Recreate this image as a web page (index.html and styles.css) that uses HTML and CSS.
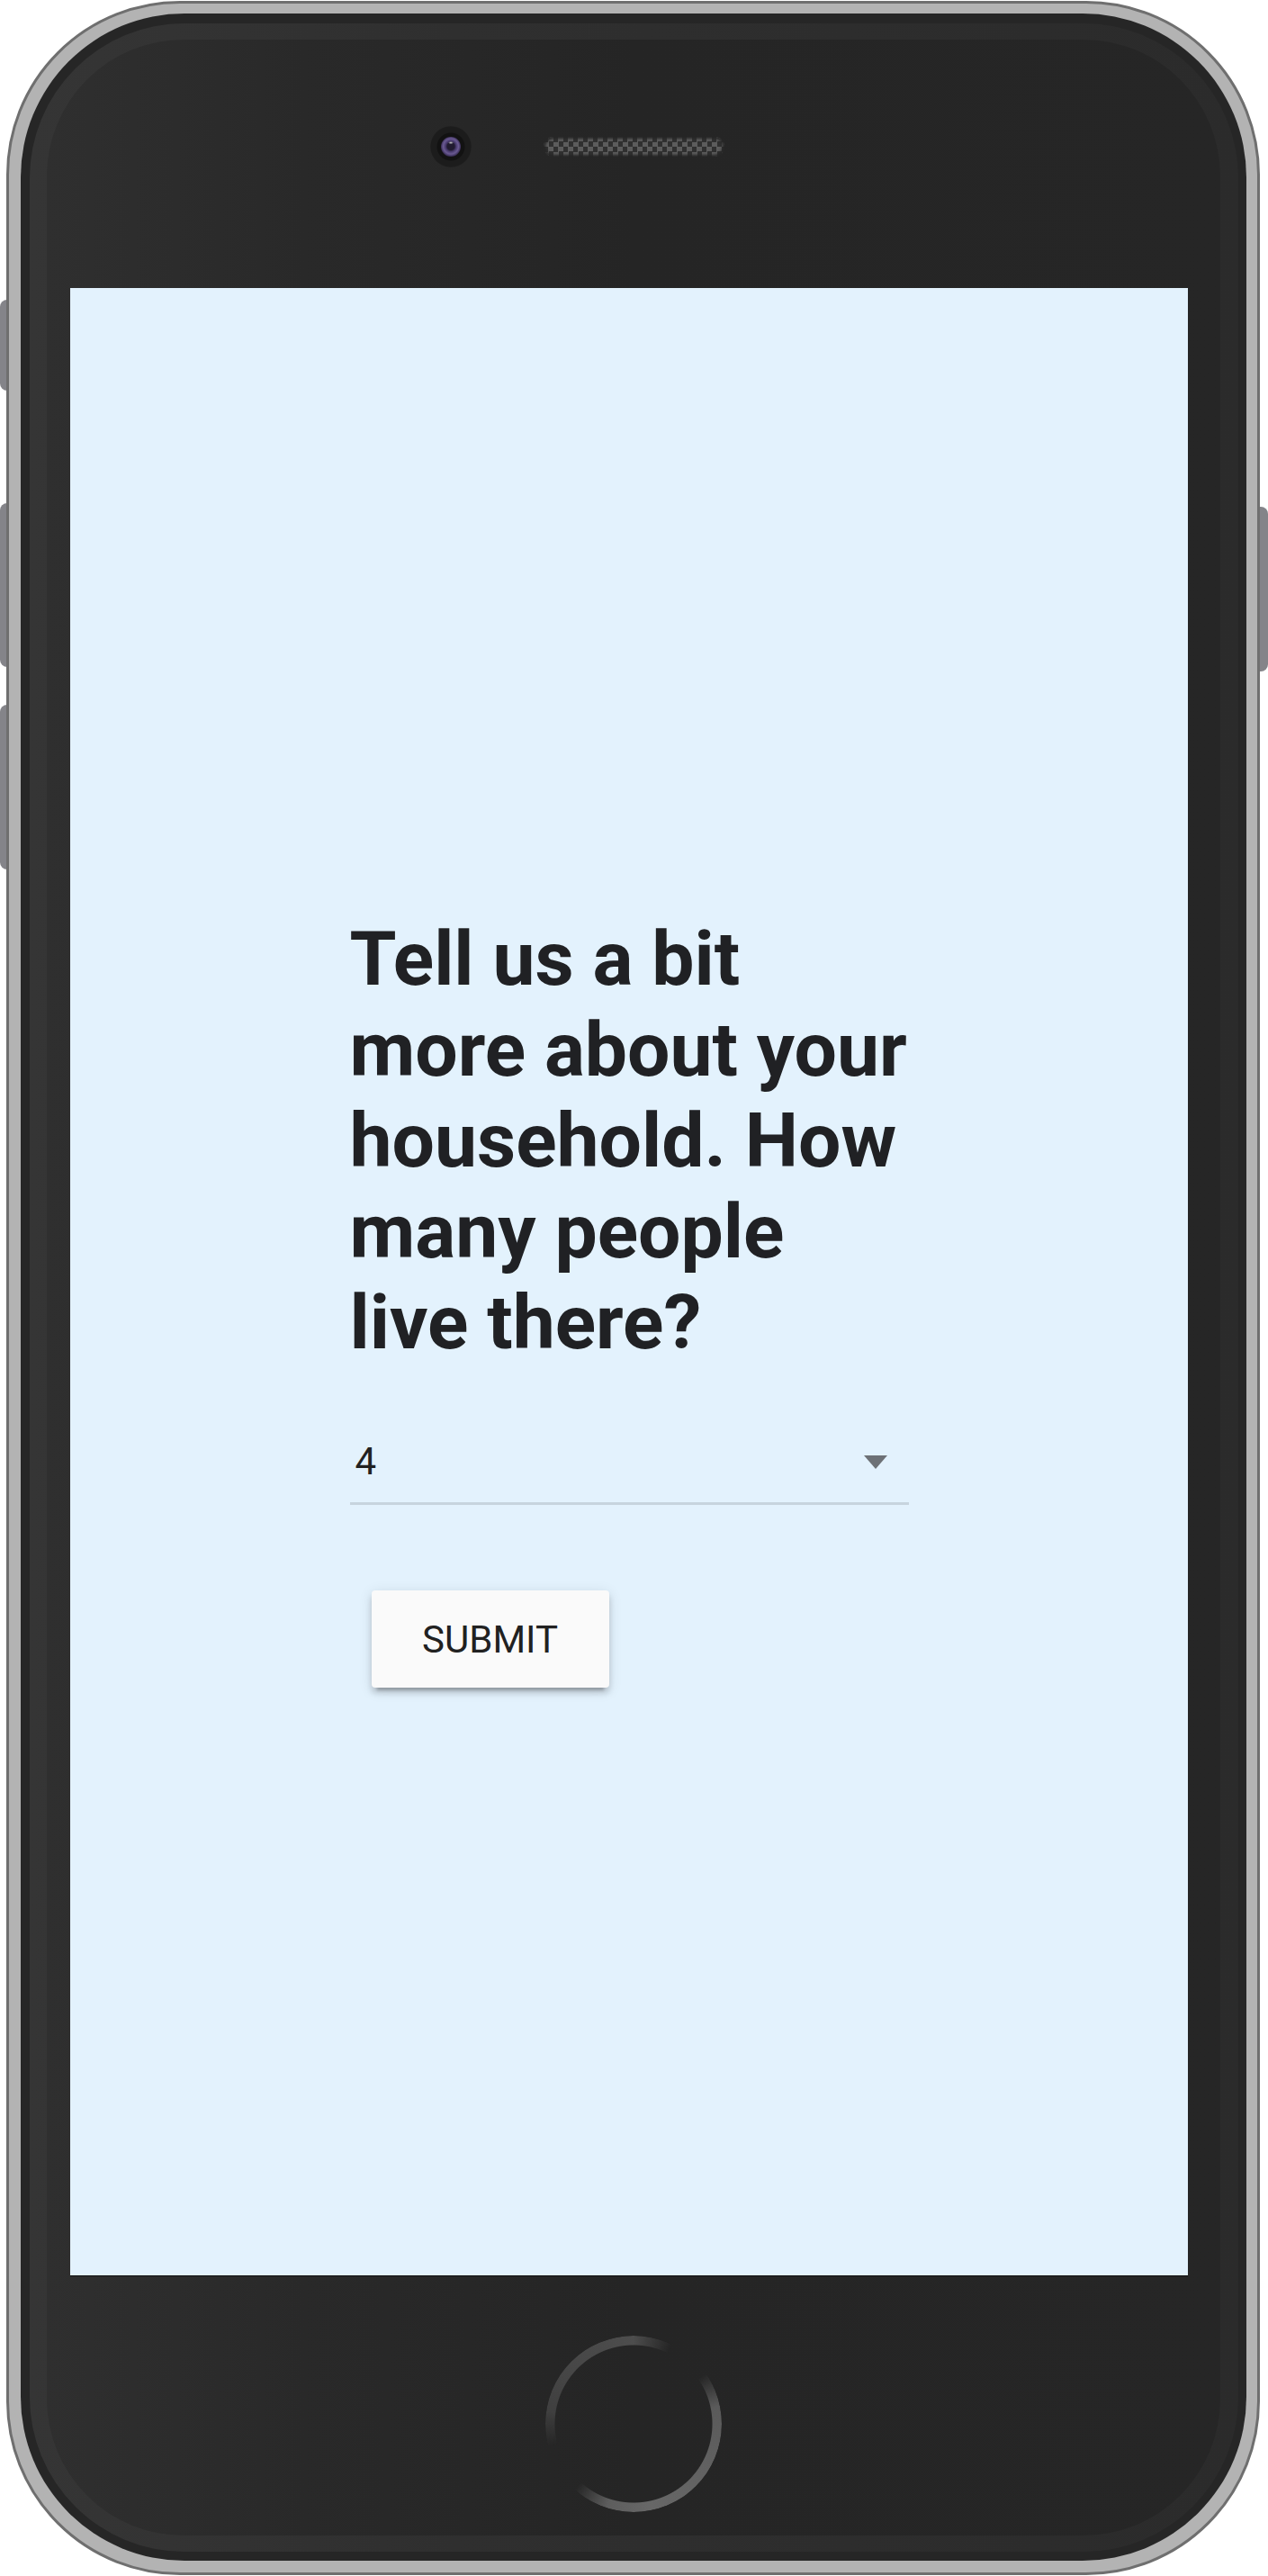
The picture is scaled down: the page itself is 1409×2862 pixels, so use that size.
FILE: index.html
```html
<!DOCTYPE html>
<html lang="en">
<head>
<meta charset="utf-8">
<title>Household survey</title>
<link rel="stylesheet" href="styles.css">
</head>
<body>
<div class="device">
  <span class="key key-mute"></span>
  <span class="key key-vol-up"></span>
  <span class="key key-vol-down"></span>
  <span class="key key-power"></span>
  <div class="frame">
    <div class="body">
      <div class="face">
        <div class="inner">
          <div class="top">
            <div class="camera"><div class="lens"></div></div>
            <div class="speaker"></div>
            <div class="top-spacer"></div>
          </div>
          <div class="screen">
            <main class="form">
              <h1 class="question">Tell us a bit more about your household. How many people live there?</h1>
              <div class="select">
                <span class="select-value">4</span>
                <span class="select-arrow"></span>
              </div>
              <button class="submit" type="button">SUBMIT</button>
            </main>
          </div>
          <div class="bottom">
            <div class="home"></div>
          </div>
        </div>
      </div>
    </div>
  </div>
</div>
</body>
</html>
```

FILE: styles.css
```css
html, body {
  margin: 0;
  padding: 0;
  background: #ffffff;
}

.device {
  position: relative;
  width: 1409px;
  height: 2862px;
}

/* side keys */
.key {
  position: absolute;
  z-index: 0;
  background: #848489;
}
.key-mute {
  left: 0;
  top: 332px;
  width: 14px;
  height: 101px;
  border-radius: 8px 0 0 8px;
}
.key-vol-up {
  left: 0;
  top: 558px;
  width: 14px;
  height: 182px;
  border-radius: 8px 0 0 8px;
}
.key-vol-down {
  left: 0;
  top: 782px;
  width: 14px;
  height: 183px;
  border-radius: 8px 0 0 8px;
}
.key-power {
  right: 0;
  top: 562px;
  width: 14px;
  height: 183px;
  border-radius: 0 8px 8px 0;
}

/* body of the phone */
.frame {
  position: relative;
  z-index: 1;
  box-sizing: border-box;
  margin: 1px 0 0 7px;
  width: 1393px;
  height: 2860px;
  border: 3px solid #6f6f6f;
  border-radius: 193px;
  background: #b3b3b3;
  padding: 11px 12px 13px 13px;
}

.body {
  box-sizing: border-box;
  height: 100%;
  border-radius: 182px;
  background: #262626;
  padding: 11px 9px 10px 10px;
}

.face {
  box-sizing: border-box;
  height: 100%;
  border-radius: 172px;
  padding: 18px 20px 18px 19px;
  background: linear-gradient(to right, #353535 0%, #2f2f2f 35%, #2b2b2b 100%);
}

.inner {
  box-sizing: border-box;
  height: 100%;
  border-radius: 152px;
  background: linear-gradient(to right, #2f2f2f 0%, #292929 22%, #252525 50%, #262626 100%);
  display: flex;
  flex-direction: column;
}

/* top: camera + speaker */
.top {
  box-sizing: border-box;
  height: 276px;
  padding-bottom: 38px;
  display: grid;
  grid-template-columns: 1fr auto 1fr;
  align-items: center;
}

.camera {
  justify-self: end;
  margin-right: 80px;
  width: 46px;
  height: 46px;
  border-radius: 50%;
  background: radial-gradient(circle, #121212 0 15px, #1c1c1c 16px 22px, #222 23px);
  display: flex;
  align-items: center;
  justify-content: center;
}

.lens {
  width: 22px;
  height: 22px;
  border-radius: 50%;
  background:
    radial-gradient(ellipse 3px 1.6px at 50% 30%, #d0d0d0 0, rgba(208,208,208,0) 100%),
    radial-gradient(circle at 50% 48%, #211b30 0 4px, #4a3b6f 6px, #6a5a92 8.5px, #3b2f58 11px);
}

.speaker {
  width: 201px;
  height: 22px;
  border-radius: 11px;
  background-color: #303030;
  background-image: conic-gradient(#5c5c5c 25%, transparent 0 50%, #5c5c5c 0 75%, transparent 0);
  background-size: 11px 11px;
  box-shadow: inset 0 0 3px 2px #262626;
}

/* screen */
.screen {
  box-sizing: border-box;
  margin: 0 36px 0 26px;
  height: 2208px;
  background: #e3f2fd;
  box-shadow: 0 1px 0 #0c0c0c;
  padding-top: 695px;
}

.form {
  width: 621px;
  margin: 0 auto;
  font-family: Roboto, "Liberation Sans", Arial, sans-serif;
}

.question {
  margin: 0;
  font-family: Roboto, "Liberation Sans", Arial, sans-serif;
  font-weight: 700;
  font-size: 84px;
  line-height: 101px;
  color: #202124;
}

.select {
  margin-top: 80px;
  display: flex;
  align-items: center;
  justify-content: space-between;
  padding: 0 24px 21px 6px;
  border-bottom: 3px solid rgba(0, 0, 0, 0.12);
  font-size: 42px;
  line-height: 48px;
  color: #212121;
}

.select-arrow {
  width: 0;
  height: 0;
  border-left: 13px solid transparent;
  border-right: 13px solid transparent;
  border-top: 15px solid #6d7176;
}

.submit {
  display: block;
  margin: 95px 0 0 24px;
  width: 264px;
  height: 108px;
  padding: 0;
  border: 0;
  border-radius: 4px;
  background: #fafafa;
  font-family: Roboto, "Liberation Sans", Arial, sans-serif;
  font-weight: 400;
  font-size: 42px;
  color: #212121;
  box-shadow:
    0 6px 6px 0 rgba(0, 0, 0, 0.14),
    0 9px 3px -6px rgba(0, 0, 0, 0.2),
    0 3px 15px 0 rgba(0, 0, 0, 0.12);
}

/* bottom: home button */
.bottom {
  flex: 1;
  display: flex;
  justify-content: center;
  padding-top: 67px;
}

.home {
  width: 196px;
  height: 196px;
  border-radius: 50%;
  background: conic-gradient(
    #4d4d4d 0deg,
    rgba(77, 77, 77, 0) 26deg,
    rgba(90, 90, 90, 0) 55deg,
    #5a5a5a 78deg,
    #616161 120deg,
    #676767 170deg,
    #5d5d5d 198deg,
    rgba(93, 93, 93, 0) 222deg,
    rgba(62, 62, 62, 0) 255deg,
    #3f3f3f 278deg,
    #474747 312deg,
    #4d4d4d 360deg
  );
  -webkit-mask: radial-gradient(circle, transparent 87px, #000 88px);
  mask: radial-gradient(circle, transparent 87px, #000 88px);
}
```
